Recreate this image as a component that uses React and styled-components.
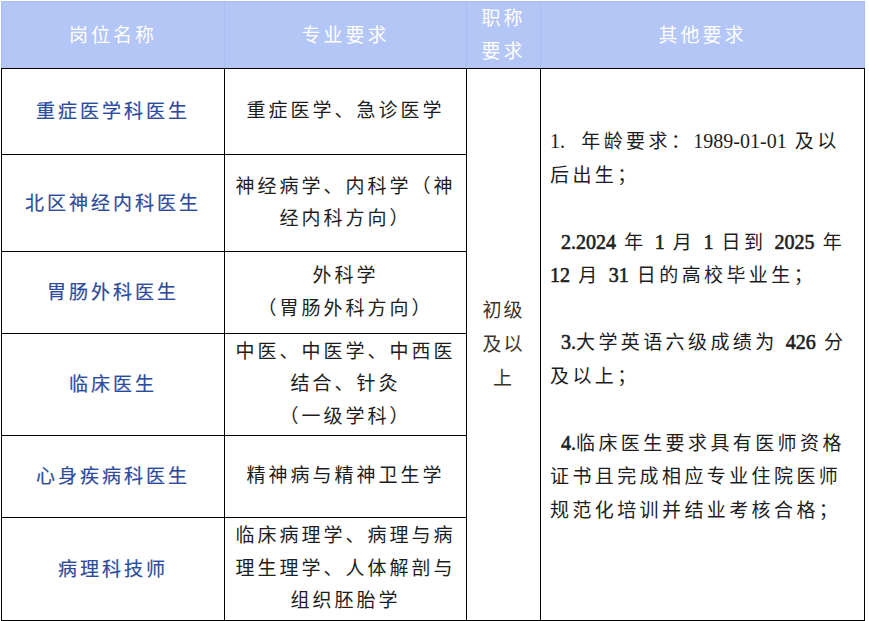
import React from 'react';
import styled, {createGlobalStyle} from 'styled-components';

const Global = createGlobalStyle`
    html, body { margin:0; padding:0; background:#fff; }
    body { padding:1px 0 0 1px; }
`
const Table = styled.table`
    border-collapse: collapse;
    table-layout: fixed;
    width: 863px;
    font-family: "Liberation Serif", "Noto Sans CJK SC", serif;
    font-size: 19px;
    letter-spacing: 3px;
`
const Head = styled.th`
    height: 66px; padding: 0;
    background: #b3c6f6;
    color: #ffffff; font-weight: 400;
    line-height: 33px;
    border: 1px solid #a6bef0;
    border-left-color: ${p => p.$soft ? '#c9cad6' : '#a6bef0'};
    border-bottom: 1px solid #000;
`
const Row = styled.tr`
    height: ${p => p.$h}px;
`
const Post = styled.td`
    padding: 0 0 4px;
    border: 1px solid #000;
    text-align: center;
    color: #2c4b9c;
    -webkit-text-stroke: 0.2px #2c4b9c;
`
const Major = styled.td`
    padding: 0 4px;
    border: 1px solid #000;
    text-align: center;
    color: #1d1d1d;
    line-height: 32.5px;
`
const Title = styled.td`
    padding: 0 6px;
    border: 1px solid #000;
    text-align: center;
    color: #3b3328;
    line-height: 34px;
    letter-spacing: 2px;
`
const Other = styled.td`
    padding: 56px 4px 0 9px;
    vertical-align: top;
    border: 1px solid #000;
    color: #1d1d1d;
    line-height: 33.5px;
    letter-spacing: 3.4px;
`
const Line = styled.span`
    display: block;
    white-space: pre;
    height: 33.5px;
    padding-left: ${p => p.$indent ? 11 : 0}px;
`
const Num = styled.span`
    letter-spacing: 0;
    font-size: 20px;
    -webkit-text-stroke: ${p => p.$bold ? '0.6px #1d1d1d' : '0'};
`

const posts = [
    {name: "重症医学科医生", major: ["重症医学、急诊医学"], h: 86},
    {name: "北区神经内科医生", major: ["神经病学、内科学（神", "经内科方向）"], h: 97},
    {name: "胃肠外科医生", major: ["外科学", "（胃肠外科方向）"], h: 82},
    {name: "临床医生", major: ["中医、中医学、中西医", "结合、针灸", "（一级学科）"], h: 102},
    {name: "心身疾病科医生", major: ["精神病与精神卫生学"], h: 82},
    {name: "病理科技师", major: ["临床病理学、病理与病", "理生理学、人体解剖与", "组织胚胎学"], h: 103},
];

export default function App () {
    return (
        <>
            <Global />
            <Table>
                <colgroup>
                    <col style={{width: 223}} />
                    <col style={{width: 242}} />
                    <col style={{width: 74}} />
                    <col style={{width: 324}} />
                </colgroup>
                <thead>
                    <tr>
                        <Head>岗位名称</Head>
                        <Head $soft>专业要求</Head>
                        <Head>职称<br />要求</Head>
                        <Head>其他要求</Head>
                    </tr>
                </thead>
                <tbody>
                    {posts.map((p, i) => (
                        <Row key={p.name} $h={p.h}>
                            <Post>{p.name}</Post>
                            <Major>
                                {p.major.map((m, j) => (
                                    <React.Fragment key={j}>{j > 0 && <br />}{m}</React.Fragment>
                                ))}
                            </Major>
                            {i === 0 && <Title rowSpan={6}>初级<br />及以<br />上</Title>}
                            {i === 0 && (
                                <Other rowSpan={6}>
                                    <Line><Num>1.</Num>  年龄要求：<Num>1989-01-01</Num> 及以</Line>
                                    <Line>后出生；</Line>
                                    <Line />
                                    <Line $indent><Num $bold>2.2024</Num> 年 <Num $bold>1</Num> 月 <Num $bold>1</Num> 日到 <Num $bold>2025</Num> 年</Line>
                                    <Line><Num $bold>12</Num> 月 <Num $bold>31</Num> 日的高校毕业生；</Line>
                                    <Line />
                                    <Line $indent><Num $bold>3.</Num>大学英语六级成绩为 <Num $bold>426</Num> 分</Line>
                                    <Line>及以上；</Line>
                                    <Line />
                                    <Line $indent><Num $bold>4.</Num>临床医生要求具有医师资格</Line>
                                    <Line>证书且完成相应专业住院医师</Line>
                                    <Line>规范化培训并结业考核合格；</Line>
                                </Other>
                            )}
                        </Row>
                    ))}
                </tbody>
            </Table>
        </>
    );
}
